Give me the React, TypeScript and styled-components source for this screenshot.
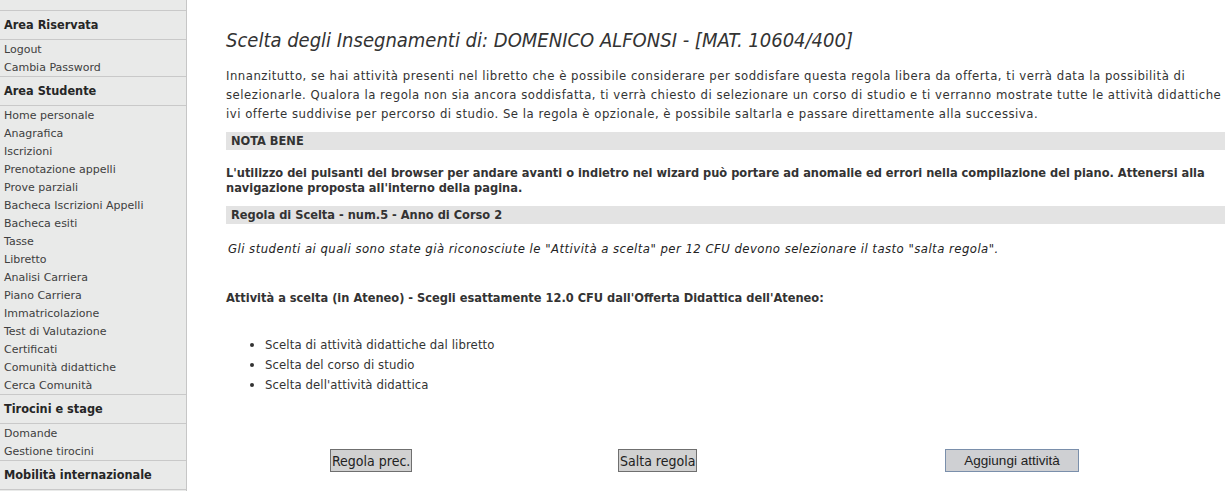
import React from 'react';
import styled, { createGlobalStyle } from 'styled-components';

const GlobalStyle = createGlobalStyle`
    html, body {
        margin: 0;
        padding: 0;
        background: #ffffff;
    }
    body {
        font-family: "DejaVu Sans Condensed", "DejaVu Sans", sans-serif;
        color: #333333;
        overflow: hidden;
    }
`;

const menu = [
    { title: 'Area Riservata', links: ['Logout', 'Cambia Password'] },
    {
        title: 'Area Studente',
        links: [
            'Home personale', 'Anagrafica', 'Iscrizioni', 'Prenotazione appelli', 'Prove parziali',
            'Bacheca Iscrizioni Appelli', 'Bacheca esiti', 'Tasse', 'Libretto', 'Analisi Carriera',
            'Piano Carriera', 'Immatricolazione', 'Test di Valutazione', 'Certificati',
            'Comunità didattiche', 'Cerca Comunità',
        ],
    },
    { title: 'Tirocini e stage', links: ['Domande', 'Gestione tirocini'] },
    { title: 'Mobilità internazionale', links: [] },
];

const steps = [
    'Scelta di attività didattiche dal libretto',
    'Scelta del corso di studio',
    "Scelta dell'attività didattica",
];

const App: React.FC = () => (
    <>
        <GlobalStyle />
        <Layout>
            <Sidebar>
                <TopStrip />
                {menu.map(section => (
                    <Section key={section.title}>
                        <SectionTitle>{section.title}</SectionTitle>
                        {section.links.length > 0 && (
                            <LinkList>
                                {section.links.map(link => (
                                    <MenuLink key={link} href="#">{link}</MenuLink>
                                ))}
                            </LinkList>
                        )}
                    </Section>
                ))}
            </Sidebar>
            <Content>
                <Title>Scelta degli Insegnamenti di: DOMENICO ALFONSI - [MAT. 10604/400]</Title>
                <Intro>
                    Innanzitutto, se hai attività presenti nel libretto che è possibile considerare per soddisfare questa regola libera da offerta, ti verrà data la possibilità di selezionarle. Qualora la regola non sia ancora soddisfatta, ti verrà chiesto di selezionare un corso di studio e ti verranno mostrate tutte le attività didattiche ivi offerte suddivise per percorso di studio. Se la regola è opzionale, è possibile saltarla e passare direttamente alla successiva.
                </Intro>
                <Bar>NOTA BENE</Bar>
                <Warning>
                    L'utilizzo dei pulsanti del browser per andare avanti o indietro nel wizard può portare ad anomalie ed errori nella compilazione del piano. Attenersi alla navigazione proposta all'interno della pagina.
                </Warning>
                <Bar>Regola di Scelta - num.5 - Anno di Corso 2</Bar>
                <Note>
                    Gli studenti ai quali sono state già riconosciute le "Attività a scelta" per 12 CFU devono selezionare il tasto "salta regola".
                </Note>
                <RuleTitle>
                    Attività a scelta (in Ateneo) - Scegli esattamente 12.0 CFU dall'Offerta Didattica dell'Ateneo:
                </RuleTitle>
                <Steps>
                    {steps.map(step => <li key={step}>{step}</li>)}
                </Steps>
                <Actions>
                    <Button type="button">Regola prec.</Button>
                    <Button type="button">Salta regola</Button>
                    <Button type="button" $primary>Aggiungi attività</Button>
                </Actions>
            </Content>
        </Layout>
    </>
);

const Layout = styled.div`
    display: flex;
    height: 491px;
    overflow: hidden;
`;

const Sidebar = styled.nav`
    width: 186px;
    flex-shrink: 0;
    background-color: #e9eae9;
    border-right: 1px solid #c6c6c6;
    display: flex;
    flex-direction: column;
`;

const TopStrip = styled.div`
    flex-shrink: 0;
    height: 10px;
    border-bottom: 1px solid #c9c9c9;
`;

const Section = styled.div`
    flex-shrink: 0;
    display: flex;
    flex-direction: column;
`;

const SectionTitle = styled.div`
    height: 28px;
    line-height: 28px;
    padding-left: 4px;
    font-family: "DejaVu Sans Condensed", "DejaVu Sans", sans-serif;
    font-weight: 700;
    font-size: 12.6px;
    color: #262626;
    border-bottom: 1px solid #c9c9c9;
`;

const LinkList = styled.div`
    display: flex;
    flex-direction: column;
    border-bottom: 1px solid #c9c9c9;
`;

const MenuLink = styled.a`
    display: block;
    height: 18px;
    line-height: 19px;
    padding-left: 4px;
    font-family: "DejaVu Sans", Verdana, sans-serif;
    font-size: 11px;
    color: #404040;
    text-decoration: none;
`;

const Content = styled.main`
    flex: 1;
    padding: 27px 0 0 39px;
    min-width: 0;
`;

const Title = styled.h1`
    margin: 0 0 13px;
    font-size: 20px;
    font-style: italic;
    font-weight: 400;
    color: #333333;
    line-height: 26px;
`;

const Intro = styled.p`
    margin: 0 0 9px;
    font-size: 13px;
    line-height: 19px;
    letter-spacing: 0.5px;
    color: #333333;
`;

const Bar = styled.div`
    height: 18px;
    line-height: 18px;
    padding-left: 5px;
    background-color: #e3e3e3;
    font-size: 12.7px;
    font-weight: 700;
    color: #333333;
`;

const Warning = styled.p`
    margin: 15px 0 11px;
    font-size: 12.7px;
    line-height: 15px;
    font-weight: 700;
    color: #333333;
`;

const Note = styled.p`
    margin: 16px 0 0 2px;
    font-size: 13px;
    line-height: 17px;
    letter-spacing: 0.46px;
    font-style: italic;
    color: #222222;
`;

const RuleTitle = styled.p`
    margin: 32px 0 0;
    font-size: 12.7px;
    line-height: 17px;
    font-weight: 700;
    color: #333333;
`;

const Steps = styled.ul`
    margin: 29px 0 0;
    padding-left: 39px;
    font-size: 13px;
    line-height: 20px;
    letter-spacing: 0.1px;
    color: #333333;
`;

const Actions = styled.div`
    display: grid;
    grid-template-columns: 288px 327px auto;
    justify-items: start;
    margin-top: 54px;
    padding-left: 104px;
`;

const Button = styled.button<{ $primary?: boolean }>`
    height: 23px;
    width: ${p => (p.$primary ? '134px' : 'auto')};
    padding: ${p => (p.$primary ? '0' : '0 1px')};
    font-family: ${p => (p.$primary ? '"Liberation Sans", Arial, sans-serif' : '"DejaVu Sans Condensed", "DejaVu Sans", sans-serif')};
    font-size: ${p => (p.$primary ? '13.5px' : '14px')};
    color: #222222;
    background-color: ${p => (p.$primary ? '#cfd0d3' : '#d1d1d1')};
    border: 1px solid ${p => (p.$primary ? '#7a8fab' : '#6f6f6f')};
    border-radius: 0;
    cursor: pointer;
`;

export default App;
